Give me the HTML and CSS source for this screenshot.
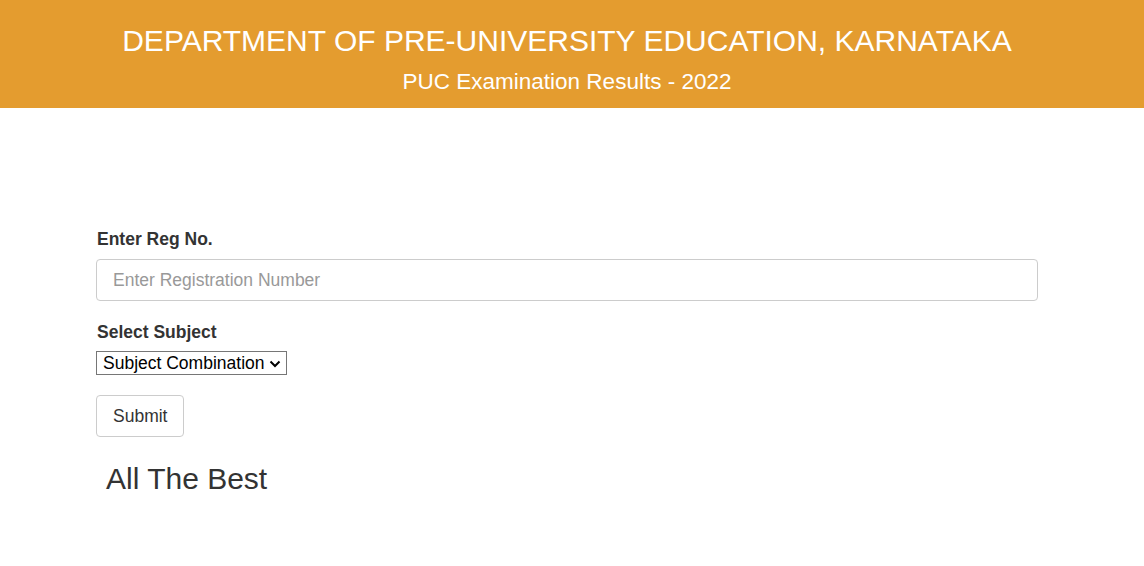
FILE: index.html
```html
<!DOCTYPE html>
<html>
<head>
<meta charset="utf-8">
<link rel="stylesheet" href="styles.css">
</head>
<body>
<header class="banner">
  <h1 class="title">DEPARTMENT OF PRE-UNIVERSITY EDUCATION, KARNATAKA</h1>
  <h2 class="subtitle">PUC Examination Results - 2022</h2>
</header>
<main class="container">
  <form class="form">
    <label class="label" for="reg">Enter Reg No.</label>
    <input class="input" id="reg" type="text" placeholder="Enter Registration Number">
    <label class="label label-sub" for="sub">Select Subject</label>
    <div class="select-wrap">
      <select class="select" id="sub"><option>Subject Combination</option></select>
      <svg class="chev" width="12" height="8" viewBox="0 0 12 8"><path d="M1.5 1.5 L6 6 L10.5 1.5" fill="none" stroke="#000" stroke-width="2"/></svg>
    </div>
    <button class="btn" type="button">Submit</button>
  </form>
  <h3 class="best">All The Best</h3>
</main>
</body>
</html>
```

FILE: styles.css
```css
* { box-sizing: border-box; }
body {
  margin: 0;
  font-family: "Liberation Sans", Arial, sans-serif;
  color: #333;
  background: #fff;
}
.banner {
  background: #e49c2f;
  color: #fff;
  text-align: center;
  height: 108px;
  padding-top: 24px;
  padding-right: 10px;
}
.title {
  margin: 0;
  font-size: 30px;
  font-weight: normal;
  line-height: 34px;
}
.subtitle {
  margin: 11px 0 0;
  font-size: 22.5px;
  font-weight: normal;
  line-height: 26px;
}
.container {
  width: 942px;
  margin: 0 0 0 96px;
  padding-top: 120px;
}
.form {
  display: flex;
  flex-direction: column;
  align-items: flex-start;
}
.label {
  font-weight: bold;
  font-size: 17.5px;
  line-height: 22px;
  margin-bottom: 9px;
  padding-left: 1px;
}
.label-sub { margin-top: 20px; margin-bottom: 8px; }
.input {
  width: 942px;
  height: 42px;
  border: 1px solid #ccc;
  border-radius: 4px;
  padding: 0 16px;
  font-family: inherit;
  font-size: 17.5px;
  color: #555;
}
.input::placeholder { color: #999; }
.select-wrap {
  position: relative;
  display: inline-block;
}
.select {
  appearance: none;
  -webkit-appearance: none;
  font-family: inherit;
  font-size: 17.5px;
  color: #000;
  width: 191px;
  height: 24px;
  border: 1px solid #767676;
  border-radius: 0;
  background: #fff;
  padding: 0 0 0 6px;
  display: block;
}
.chev {
  position: absolute;
  right: 6px;
  top: 9px;
  pointer-events: none;
}
.btn {
  margin-top: 20px;
  height: 42px;
  padding: 0 16px;
  font-family: inherit;
  font-size: 17.5px;
  color: #333;
  background: #fff;
  border: 1px solid #ccc;
  border-radius: 4px;
}
.best {
  margin: 24px 0 0 10px;
  font-size: 30px;
  font-weight: normal;
  line-height: 36px;
}
```
